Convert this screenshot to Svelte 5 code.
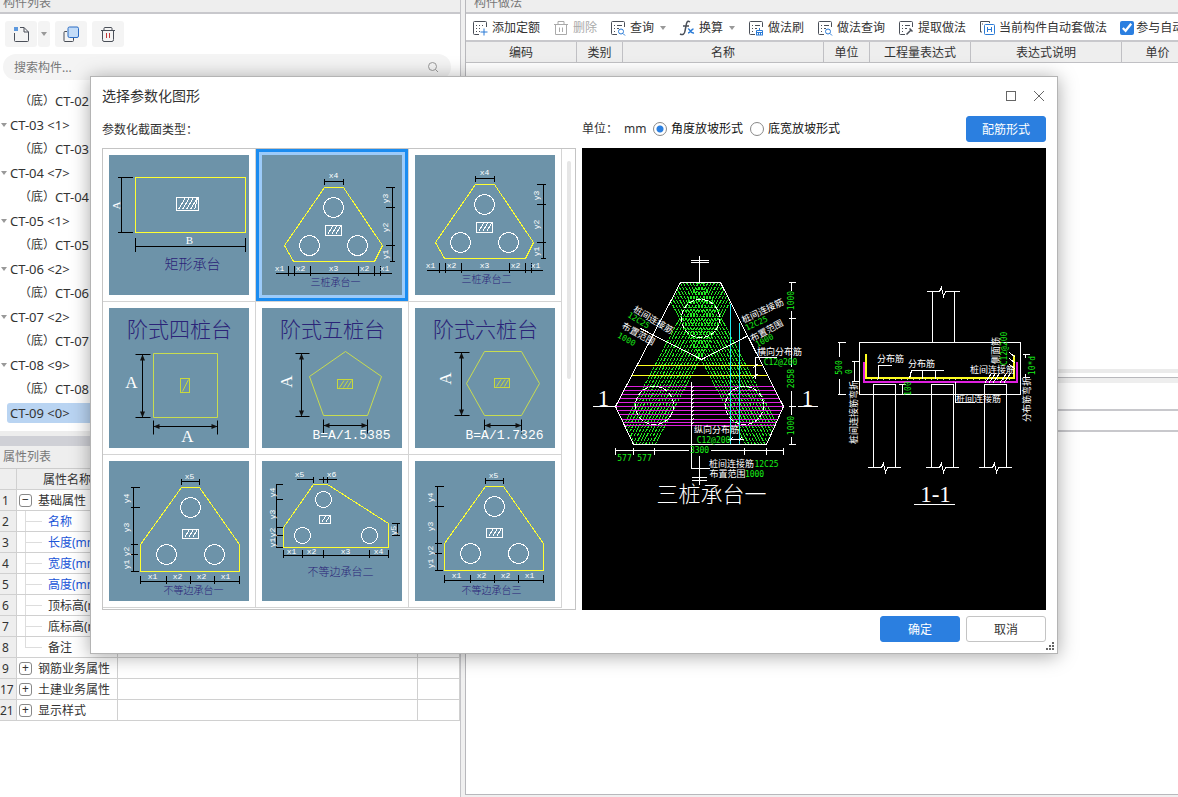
<script lang="ts">
  type Label = [number, number, string, number?];

  interface Thumb {
    name: string;
    title: [number, number, number];
    outline: string;
    circles?: [number, number][];
    r?: number;
    column: [number, number, number, number];
    dims: string;
    labels: Label[];
    shift?: [number, number];
    stepped?: boolean;
    note?: string;
  }

  const tools = [
    { icon: "add", label: "添加定额" },
    { icon: "trash", label: "删除", disabled: true },
    { icon: "find", label: "查询", menu: true },
    { icon: "fx", label: "换算", menu: true },
    { icon: "brush", label: "做法刷" },
    { icon: "find", label: "做法查询" },
    { icon: "pick", label: "提取做法" },
    { icon: "auto", label: "当前构件自动套做法" },
  ];

  const columns = ["编码", "类别", "名称", "单位", "工程量表达式", "表达式说明", "单价"];

  const tree = [
    { code: "CT-02", child: true },
    { code: "CT-03 <1>" },
    { code: "CT-03", child: true },
    { code: "CT-04 <7>" },
    { code: "CT-04", child: true },
    { code: "CT-05 <1>" },
    { code: "CT-05", child: true },
    { code: "CT-06 <2>" },
    { code: "CT-06", child: true },
    { code: "CT-07 <2>" },
    { code: "CT-07", child: true },
    { code: "CT-08 <9>" },
    { code: "CT-08", child: true },
    { code: "CT-09 <0>", selected: true },
  ];

  const properties = [
    { no: 1, name: "基础属性", sign: "−" },
    { no: 2, name: "名称", blue: true },
    { no: 3, name: "长度(mm)", blue: true },
    { no: 4, name: "宽度(mm)", blue: true },
    { no: 5, name: "高度(mm)", blue: true },
    { no: 6, name: "顶标高(m)" },
    { no: 7, name: "底标高(m)" },
    { no: 8, name: "备注", last: true },
    { no: 9, name: "钢筋业务属性", sign: "+" },
    { no: 17, name: "土建业务属性", sign: "+" },
    { no: 21, name: "显示样式", sign: "+" },
  ];

  const triangle = {
    outline: "62,32 81,32 120,90 112,106 31,106 22,90",
    circles: [[71, 52], [47, 90], [95, 90]] as [number, number][],
    column: [63, 70, 16, 10] as [number, number, number, number],
    dims:
      "M62 26H81M62 23V29M81 23V29 M130 32V106M123 32H132M123 52H132M123 90H132M127 106H132" +
      "M13 118H129M26 110V120M32 110V120M48 110V120M96 110V120M112 110V120M118 110V120",
    labels: [
      [71, 20, "x4"], [123, 43, "y3", -90], [123, 72, "y2", -90], [123, 99, "y1", -90],
      [17, 113, "x1"], [38, 113, "x2"], [71, 113, "x3"], [102, 113, "x2"], [122, 113, "x1"],
    ] as Label[],
  };

  const uneven = {
    outline: "72,26 90,26 130,83 130,110 31,110 31,83",
    circles: [[81, 46], [57, 93], [105, 93]] as [number, number][],
    column: [73, 68, 16, 9] as [number, number, number, number],
    dims:
      "M72 20H90M72 17V23M90 17V23 M24 26V110M21 26H30M21 46H30M21 83H28M21 93H28M21 110H29" +
      "M31 120H130M31 114V122M57 114V122M81 114V122M105 114V122M130 114V122",
    labels: [
      [80, 15, "x5"], [17, 37, "y4", -90], [17, 66, "y3", -90], [17, 90, "y2", -90], [17, 103, "y1", -90],
      [43, 115, "x1"], [68, 115, "x2"], [92, 115, "x2"], [116, 115, "x1"],
    ] as Label[],
  };

  const thumbs: Thumb[] = [
    {
      name: "矩形承台",
      title: [83, 107, 14],
      outline: "26,22 136,22 136,77 26,77",
      column: [67, 42, 22, 13],
      dims: "M12 22V77M8 22H23M8 77H23 M26 91H136M26 82V96M136 82V96",
      labels: [[6, 50, "A", -90], [80, 84, "B"]],
    },
    { name: "三桩承台一", title: [73, 126, 10], ...triangle },
    { name: "三桩承台二", title: [73, 126, 10], ...triangle, shift: [-2, -3] },
    {
      name: "阶式四桩台",
      title: [70, 19, 21],
      stepped: true,
      outline: "44,45 108,45 108,109 44,109",
      column: [71, 70, 9, 14],
      dims: "M33 46V109M26 46H41M26 109H41 M44 118H108M44 112V126M108 112V126",
      labels: [[22, 74, "A"], [78, 128, "A"]],
    },
    {
      name: "阶式五桩台",
      title: [70, 19, 21],
      stepped: true,
      outline: "83,43 119,68 105,107 61,107 47,68",
      column: [75, 71, 15, 9],
      dims: "M39 45V108M33 45H47M33 108H47 M61 117H105M61 111V125M105 111V125",
      labels: [[24, 73, "A", -90]],
      note: "B=A/1.5385",
    },
    {
      name: "阶式六桩台",
      title: [70, 19, 21],
      stepped: true,
      outline: "69,43 106,43 124,75 106,107 69,107 51,75",
      column: [79, 70, 15, 9],
      dims: "M46 44V107M39 44H54M39 107H54 M69 117H106M69 111V125M106 111V125",
      labels: [[30, 70, "A", -90]],
      note: "B=A/1.7326",
    },
    { name: "不等边承台一", title: [84, 128, 10], ...uneven },
    {
      name: "不等边承台二",
      title: [78, 109, 11],
      outline: "51,23 65,23 126,62 126,86 21,86 21,66",
      circles: [[61, 38], [40, 74], [107, 74]],
      r: 8,
      column: [57, 54, 11, 8],
      dims:
        "M34 18H51M51 15V21M56 18H74M61 15V21M65 15V21 M14 23V86M13 23H20M13 38H20M13 66H20M13 74H20M13 86H20" +
        "M135 62V74M129 62H137M129 74H137 M21 94H126M21 88V96M40 88V96M61 88V96M107 88V96M126 88V96",
      labels: [
        [37, 13, "x5"], [69, 13, "x6"], [10, 31, "y4", -90], [10, 53, "y3", -90], [10, 71, "y2", -90],
        [10, 81, "y1", -90], [131, 69, "y5", -90], [29, 90, "x1"], [49, 90, "x2"], [83, 90, "x3"], [116, 90, "x4"],
      ],
    },
    { name: "不等边承台三", title: [78, 129, 10], ...uneven, shift: [-2, -1] },
  ];

  const hatch = ([x, y, w, h]: number[]) => {
    let d = "";
    for (let i = 2; i < w - 3; i += 4) {
      d += `M${x + i} ${y + h - 1}L${x + Math.min(i + h / 2, w - 1)} ${y + 1}`;
    }
    return d;
  };

  // arrowheads at both ends of the two dimension lines of a stepped cap
  const arrows = (dims: string) => {
    const [, vx, y1, y2] = dims.match(/^M(\d+) (\d+)V(\d+)/)!.map(Number);
    const [, x1, hy, x2] = dims.split(" M")[1].match(/^(\d+) (\d+)H(\d+)/)!.map(Number);
    return (
      `M${vx} ${y1}l2.500 6h-5zM${vx} ${y2}l2.500 -6h-5z` +
      `M${x1} ${hy}l6 2.500v-5zM${x2} ${hy}l-6 2.500v-5z`
    );
  };

  const bars = Array.from({ length: 14 }, (_, i) => -21 + i * 3.2);
  const ties = [386, 390, 394, 398, 402, 406, 410, 414, 419, 422, 425];
  const notches = Array.from({ length: 10 }, (_, i) => 387 + i * 4);
  const capOutline = "680,282 720,282 783,406 766,444 633,444 615,406";

  const white: [number, number, string, number?][] = [
    [653, 319, "桩间连接筋", 31],
    [638, 333, "布置范围", 29],
    [762, 310, "桩间连接筋", -25],
    [766, 330, "布置范围", -28],
    [779, 351, "横向分布筋"],
    [716, 429, "纵向分布筋"],
    [731, 463, "桩间连接筋"],
    [727, 473, "布置范围"],
    [890, 358, "分布筋"],
    [921, 363, "分布筋"],
    [992, 369, "桩间连接筋"],
    [978, 398, "桩间连接筋"],
    [995, 350, "侧面筋", -90],
    [853, 412, "桩间连接筋弯折", -90],
    [1026, 399, "分布筋弯折", -90],
  ];

  const green: [number, number, string, number?][] = [
    [638, 320, "12C25", 31],
    [626, 339, "1000", 29],
    [756, 323, "12C25", -25],
    [764, 340, "1000", -28],
    [780, 362, "C12@200"],
    [713, 440, "C12@200"],
    [699, 450, "3300"],
    [624, 458, "577"],
    [644, 458, "577"],
    [766, 464, "12C25"],
    [754, 474, "1000"],
    [791, 300, "1000", -90],
    [791, 378, "2858", -90],
    [791, 425, "1000", -90],
    [839, 367, "500", -90],
    [849, 371, "0", -90],
    [908, 388, "100", -90],
    [1004, 348, "C12@200", -90],
    [1032, 365, "10*d", -90],
  ];

  let selected = $state(1);
  let slope = $state("angle");
  let join = $state(true);
</script>

{#snippet icon(kind: string)}
  <svg class="icon" viewBox="0 0 16 16" aria-hidden="true">
    {#if kind === "trash"}
      <path class="ink" d="M1 4.5H15M5 4V1.5H11V4M2.5 5V14.5H13.5V5M6.5 7.5V12M9.5 7.5V12" />
    {:else if kind === "fx"}
      <path class="ink bold" d="M11 2C8 0 7.500 3 7 6L6 11C5.500 14 4 15.500 1 14M4 6H10" />
      <path class="blue bold" d="M9 9C11 8 11 14 15 13M14.500 9C12 9 12 13 9 13" />
    {:else if kind === "auto"}
      <path class="ink" d="M3 12H1.500V1.500H10.500V3M4 4H3" />
      <rect class="blue" x="5.500" y="4.500" width="10" height="10" rx="1" />
      <path class="blue" d="M8.500 7V12M12.500 7V12M8.500 9.500H12.500" />
    {:else}
      <path class="ink" d="M7 14.500H2.500Q1.500 14.500 1.500 13.500V2.500Q1.500 1.500 2.500 1.500H13.500Q14.500 1.500 14.500 2.500V7" />
      {#if kind === "add"}
        <path class="ink dots" d="M4 5.500H13M4 8.500H10M4 11.500H8" />
        <path class="blue" d="M12 8.500V15.500M8.500 12H15.500" />
      {:else}
        <path class="ink" d="M4 5.500H5M7 5.500H12M4 8.500H5M7 8.500H9M4 11.500H5" />
        {#if kind === "find"}
          <circle class="blue" cx="11" cy="11.500" r="2.500" />
          <path class="blue" d="M13 13.500L15 15.500" />
        {:else if kind === "brush"}
          <path class="blue" d="M11.500 8V10.500M8.500 15V10.500H14.500V15M8.500 12.500H14.500M10.500 15V13M12.500 15V13M8 15H15" />
        {:else}
          <path class="ink bold" d="M8.500 14.500L13 10M11.500 8.500L14.500 11.500" />
        {/if}
      {/if}
    {/if}
  </svg>
{/snippet}

<div class="workspace">
  <aside class="left">
    <h2 class="bar">构件列表</h2>
    <div class="actions">
      <button class="square first" aria-label="新建">
        <svg class="icon" viewBox="0 0 16 16">
          <path class="check" d="M1 2H5M1 4H5M2 1V5M4 1V5" />
          <path class="ink" d="M1.500 7V14.500Q1.500 15.500 2.500 15.500H14.500Q15.500 15.500 15.500 14.500V6L11 1.500H7M11 1.500V6H15.500" />
        </svg>
      </button>
      <button class="square drop" aria-label="新建选项"><span class="caret"></span></button>
      <button class="square" aria-label="复制">
        <svg class="icon" viewBox="0 0 16 16">
          <path class="ink" d="M4 5.500H2Q1 5.500 1 6.500V14.500Q1 15.500 2 15.500H9.500Q10.500 15.500 10.500 14.500V12" />
          <rect class="copy" x="5" y="1" width="10.500" height="10.500" rx="1.500" />
        </svg>
      </button>
      <button class="square" aria-label="删除构件">
        <svg class="icon" viewBox="0 0 16 16">
          <path class="ink" d="M1 4.500H15M4 4V2.500Q4 1.500 5 1.500H11Q12 1.500 12 2.500V4M2.500 5V13.500Q2.500 15.500 4 15.500H12Q13.500 15.500 13.500 13.500V5" />
          <path class="red" d="M6.500 7V12M9.500 7V12" />
        </svg>
      </button>
    </div>
    <label class="search">
      <input type="text" placeholder="搜索构件..." aria-label="搜索构件" />
      <svg class="lens" viewBox="0 0 12 12"><circle cx="5.500" cy="5.500" r="4" /><path d="M8.500 8.500L11 11" /></svg>
    </label>
    <ul class="tree">
      {#each tree as node}
        <li class:child={node.child} class:selected={node.selected}>
          {#if node.child}
            <span>（底）</span>
          {:else if !node.selected}
            <span class="caret"></span>
          {/if}
          <span class="code">{node.code}</span>
        </li>
      {/each}
    </ul>
    <div class="splitter"></div>
    <h2 class="bar low">属性列表</h2>
    <table class="props">
      <colgroup><col class="no" /><col class="name" /><col /><col class="extra" /></colgroup>
      <thead>
        <tr><th></th><th>属性名称</th><th>属性值</th><th>附加</th></tr>
      </thead>
      <tbody>
        {#each properties as row}
          <tr>
            <th>{row.no}</th>
            <td class="label" class:leaf={!row.sign} class:blue-text={row.blue} class:last={row.last}>
              {#if row.sign}<button class="toggle" aria-label="展开">{row.sign}</button>{/if}{row.name}
            </td>
            <td></td>
            <td></td>
          </tr>
        {/each}
      </tbody>
    </table>
  </aside>

  <main class="right">
    <h2 class="bar">构件做法</h2>
    <div class="tools">
      {#each tools as tool}
        <button class="tool" disabled={tool.disabled}>
          {@render icon(tool.icon)}{tool.label}
          {#if tool.menu}<span class="caret"></span>{/if}
        </button>
      {/each}
      <label class="tool join">
        <input type="checkbox" bind:checked={join} />参与自动套
      </label>
    </div>
    <div class="sheet">
      <table class="grid">
        <colgroup>
          <col class="c1" /><col class="c2" /><col class="c3" /><col class="c4" /><col class="c5" /><col class="c6" /><col class="c7" />
        </colgroup>
        <thead>
          <tr>{#each columns as column}<th>{column}</th>{/each}</tr>
        </thead>
      </table>
    </div>
    <div class="lower">
      <div class="strip"></div>
      <div class="lower-tools"></div>
      <div class="lower-head"></div>
    </div>
  </main>

  <div class="dialog" role="dialog" aria-labelledby="dialog-title">
    <header>
      <h1 id="dialog-title">选择参数化图形</h1>
      <button class="plain" aria-label="最大化">
        <svg viewBox="0 0 12 12"><rect x="1.500" y="1.500" width="9" height="9" /></svg>
      </button>
      <button class="plain" aria-label="关闭">
        <svg viewBox="0 0 12 12"><path d="M1 1L11 11M11 1L1 11" /></svg>
      </button>
    </header>

    <div class="content">
      <section class="types">
        <div class="caption">参数化截面类型：</div>
        <div class="gallery">
          <div class="cells">
            {#each thumbs as thumb, i}
              <button
                class="cell"
                class:active={selected === i}
                aria-label={thumb.name}
                aria-pressed={selected === i}
                onclick={() => (selected = i)}
              >
                <svg class="thumb" class:stepped={thumb.stepped} viewBox="-0.5 -0.5 140 140">
                  <g transform="translate({(thumb.shift ?? [0, 0]).join(' ')})">
                    <path class="dim" d={thumb.dims} />
                    {#if thumb.stepped}<path class="arrow" d={arrows(thumb.dims)} />{/if}
                    <polygon class="cap" points={thumb.outline} />
                    {#each thumb.circles ?? [] as [cx, cy]}
                      <circle {cx} {cy} r={thumb.r ?? 10} />
                    {/each}
                    <rect class="col" x={thumb.column[0]} y={thumb.column[1]} width={thumb.column[2]} height={thumb.column[3]} />
                    <path class="col" d={hatch(thumb.column)} />
                    {#each thumb.labels as [x, y, text, turn]}
                      <text class="mark" class:big={text.length === 1} transform="translate({x} {y}) rotate({turn ?? 0})">{text}</text>
                    {/each}
                    <text class="title" x={thumb.title[0]} y={thumb.title[1]} font-size={thumb.title[2]}>{thumb.name}</text>
                    {#if thumb.note}<text class="note" x="89" y="127">{thumb.note}</text>{/if}
                  </g>
                </svg>
              </button>
            {/each}
          </div>
          <div class="scroll"></div>
        </div>
      </section>

      <section class="preview">
        <div class="options">
          <span class="unit">单位：</span>
          <span class="mm">mm</span>
          <label><input type="radio" name="slope" value="angle" bind:group={slope} />角度放坡形式</label>
          <label><input type="radio" name="slope" value="width" bind:group={slope} />底宽放坡形式</label>
          <button class="btn primary">配筋形式</button>
        </div>
        <svg class="drawing" viewBox="581.5 147.5 464 462" role="img" aria-label="三桩承台一">
          <defs>
            <clipPath id="cap-clip"><polygon points={capOutline} /></clipPath>
          </defs>
          <g clip-path="url(#cap-clip)">
            {#each bars as offset}
              <path class="g" d="M{719 + offset} 282L{634 + offset} 444M{681 - offset} 282L{766 - offset} 444" />
            {/each}
            {#each ties as y}
              <path class="m" d="M610 {y}H790" />
            {/each}
            <path class="y" d="M610 365H790M610 375H790" />
          </g>
          <path class="c" d="M730 303V444M739 322V444" />
          <polygon class="w" points={capOutline} />
          <g class="piles">
            <circle cx="700" cy="318" r="19" />
            <circle cx="654" cy="405" r="19" />
            <circle cx="744" cy="405" r="19" />
          </g>
          <path class="w" d="M640 328L701 359L748 335" />
          <path class="w" d="M699 255V282M690 260H708M690 262H708M699 455V484M691 477H706M691 480H706" />
          <path class="w" d="M691 381V468H709" />
          {#each notches as y}
            <path class="w" d="M690 {y + 2}L693 {y - 1}" />
          {/each}
          <path class="w" d="M776 357H755V378M753 367L758 363M753 377L758 373M727 439H743M729 441L732 437M738 441L741 437" />
          <path class="w" d="M791 282V290M791 310V366M791 390V414M791 436V444M788 282H795M788 318H795M788 406H795M788 444H795" />
          <path class="w" d="M615 450H688M710 450H783M615 447V454M633 447V454M654 447V454M744 447V454M766 447V454M783 447V454" />
          <path class="w" d="M592 406H614M797 406H817" />

          <path class="w" d="M932 342V291M954 342V291M926 291H939L941 287L943 296L945 291H959" />
          <path class="w" d="M859 342H1020V394H859Z" />
          <path class="w" d="M873 467V384H895V467M931 467V384H953V467M984 467V384H1006V467" />
          <path class="w" d="M867 467H881L883 463L885 472L887 467H900M925 467H939L941 463L943 472L945 467H958M978 467H992L994 463L996 472L998 467H1011" />
          <path class="m thick" d="M863 361V381H1016V361" />
          <path class="y thick" d="M865 353V377H1013V354" />
          <path class="speck" d="M870 379H1010" />
          <path class="w" d="M878 378V365H891M909 378L911 370H943M922 370V378M935 370V378M955 381V402H974" />
          <path class="w" d="M984 383L991 373M988 383L995 373M992 383L999 373M999 383L1006 373M1003 383L1010 373M1009 352L1015 357M1009 358L1015 363M1009 364L1015 369" />
          <path class="w" d="M839 342V356M839 378V394M837 342H845M837 394H845M854 361V381M851 361H859M851 381H859" />
          <path class="w" d="M902 384V394M898 384H905M898 394H905M1022 354H1029M1022 377H1029M1025 354V357M1025 373V377" />
          <path class="w" d="M913 504H954" />
          {#each white as [x, y, text, turn]}
            <text class="wt" transform="translate({x} {y}) rotate({turn ?? 0})">{text}</text>
          {/each}
          {#each green as [x, y, text, turn]}
            <text class="gt" transform="translate({x} {y}) rotate({turn ?? 0})">{text}</text>
          {/each}
          <text class="num" x="603" y="398">1</text>
          <text class="num" x="807" y="398">1</text>
          <text class="num" x="935" y="494">1-1</text>
          <text class="big-title" x="711" y="491">三桩承台一</text>
        </svg>
      </section>
    </div>

    <footer>
      <button class="btn primary">确定</button>
      <button class="btn">取消</button>
    </footer>
    <svg class="grip" viewBox="0 0 8 8" aria-hidden="true">
      <path d="M6 0h2v2h-2zM3 3h2v2h-2zM6 3h2v2h-2zM0 6h2v2h-2zM3 6h2v2h-2zM6 6h2v2h-2z" />
    </svg>
  </div>
</div>

<style>
  :global(body) {
    overflow: hidden;
    background: #fff;
  }

  .workspace {
    position: relative;
    display: flex;
    gap: 4px;
    box-sizing: border-box;
    height: calc(100vh + 9px);
    margin-top: -9px;
    background: #f0f0f0;
    color: #333;
    font: 12px/20px "Noto Sans", "Noto Sans CJK SC", sans-serif;
  }

  button,
  input {
    margin: 0;
    padding: 0;
    border: 0;
    background: none;
    color: inherit;
    font: inherit;
  }

  .left {
    flex: 0 0 460px;
    border-right: 1px solid #c4c4c8;
    background: #fff;
  }

  .right {
    display: flex;
    flex: 1;
    flex-direction: column;
    min-width: 0;
    margin-bottom: 2px;
    border-bottom: 1px solid #b8b8bc;
    border-left: 1px solid #b8b8bc;
    background: #fff;
  }

  .bar {
    height: 21px;
    margin: 0;
    padding-left: 3px;
    background: #eee;
    color: #777;
    font-size: 12px;
    font-weight: 400;
    line-height: 23px;
  }

  .left > .bar:first-child,
  .right > .bar {
    border-bottom: 2px solid #c8c8cc;
  }

  .bar.low {
    height: 22px;
    line-height: 22px;
  }

  .right > .bar {
    padding-left: 8px;
  }

  .caret {
    flex: none;
    width: 0;
    border: 3px solid transparent;
    border-top: 4px solid #999;
    border-bottom: 0;
  }

  .icon {
    flex: none;
    width: 16px;
    height: 16px;
    fill: none;
  }

  .ink {
    stroke: #4a4f58;
  }

  .blue {
    stroke: #2b7bd6;
  }

  .bold {
    stroke-width: 1.5;
  }

  .dots {
    stroke-dasharray: 1 2;
  }

  .red {
    stroke: #c23a3a;
  }

  .check {
    stroke: #2b7bd6;
    stroke-width: 1;
  }

  .copy {
    fill: #c3dcf8;
    stroke: #2b6cc4;
  }

  .actions {
    display: flex;
    gap: 5px;
    padding: 7px 5px;
  }

  .square {
    display: flex;
    align-items: center;
    justify-content: center;
    width: 32px;
    height: 26px;
    border-radius: 3px;
    background: #f4f4f4;
  }

  .drop {
    width: 12px;
    margin-left: -4px;
  }

  .search {
    display: flex;
    align-items: center;
    height: 26px;
    margin: 0 9px 0 3px;
    padding: 0 12px 0 11px;
    border-radius: 13px;
    background: #f4f4f4;
  }

  .search input {
    flex: 1;
    padding-top: 2px;
    outline: 0;
  }

  .search input::placeholder {
    color: #777;
  }

  .lens {
    width: 12px;
    height: 12px;
    fill: none;
    stroke: #999;
  }

  .tree {
    display: flex;
    flex-direction: column;
    gap: 4px;
    margin: 0;
    padding: 11px 0 8px;
    list-style: none;
  }

  .tree li {
    display: flex;
    align-items: center;
    height: 20px;
    gap: 3px;
  }

  .tree li.child {
    padding-left: 19px;
    gap: 0;
  }

  .tree li.selected {
    margin-left: 7px;
    padding-left: 3px;
    border-radius: 3px 0 0 3px;
    background: #b9d4f2;
  }

  .tree .caret {
    margin-left: 1px;
  }

  .code {
    font-size: 13px;
    white-space: pre;
  }

  .splitter {
    height: 10px;
    border-top: 5px solid #ededed;
    background: #cfd0d6;
  }

  table {
    width: 100%;
    border-collapse: separate;
    border-spacing: 0;
    table-layout: fixed;
  }

  th {
    font-weight: 400;
  }

  .props {
    border-top: 1px solid #ccc;
  }

  .props th,
  .props td {
    box-sizing: border-box;
    height: 21px;
    padding: 2px 0 0;
    border-right: 1px solid #d0d0d0;
    border-bottom: 1px solid #d0d0d0;
    line-height: 18px;
    white-space: nowrap;
  }

  .props th {
    background: #eee;
  }

  .props tbody th {
    overflow: hidden;
    padding-left: 2px;
    text-align: left;
  }

  .props tbody tr:nth-child(n + 10) th {
    padding-left: 0;
  }

  .no {
    width: 17px;
  }

  .name {
    width: 101px;
  }

  .extra {
    width: 42px;
  }

  .props .label {
    position: relative;
    overflow: hidden;
    padding-left: 2px;
  }

  .props .leaf {
    padding-left: 31px;
  }

  .props .blue-text {
    color: #1a55d8;
  }

  .leaf::before {
    position: absolute;
    top: 0;
    left: 8px;
    height: 21px;
    border-left: 1px solid #ddd;
    content: "";
  }

  .leaf.last::before {
    height: 10px;
  }

  .leaf::after {
    position: absolute;
    top: 10px;
    left: 8px;
    width: 17px;
    border-top: 1px solid #ddd;
    content: "";
  }

  .toggle {
    width: 13px;
    height: 13px;
    box-sizing: border-box;
    margin-right: 6px;
    border: 1px solid #888;
    border-radius: 3px;
    font-size: 12px;
    line-height: 10px;
    vertical-align: 1px;
  }

  .tools {
    display: flex;
    align-items: center;
    height: 24px;
    gap: 13px;
    padding: 2px 0 0 6px;
    overflow: hidden;
    border-bottom: 2px solid #c8c8cc;
  }

  .tool {
    display: flex;
    flex: none;
    align-items: center;
    gap: 4px;
    white-space: nowrap;
  }

  .tool:disabled {
    color: #aaa;
  }

  .tool:disabled .ink {
    stroke: #aaa;
  }

  .tool .caret {
    margin-left: 2px;
  }

  .join {
    gap: 2px;
  }

  .join input {
    width: 14px;
    height: 14px;
    accent-color: #2b7fe0;
  }

  .sheet {
    flex: 1;
    overflow: hidden;
  }

  .grid {
    width: 728px;
  }

  .grid th {
    box-sizing: border-box;
    height: 21px;
    padding: 2px 0 0;
    border-right: 1px solid #c0c0c4;
    border-bottom: 1px solid #c0c0c4;
    background: #eee;
    line-height: 18px;
  }

  .c1 { width: 111px; }
  .c2 { width: 46px; }
  .c3 { width: 201px; }
  .c4 { width: 46px; }
  .c5 { width: 101px; }
  .c6 { width: 151px; }
  .c7 { width: 72px; }

  .lower {
    height: 421px;
    border-top: 4px solid #ebebeb;
  }

  .strip {
    height: 5px;
    margin-top: 4px;
    border-top: 1px solid #b8b8bc;
    background: #eee;
  }

  .lower-tools {
    height: 26px;
    border-bottom: 2px solid #c8c8cc;
  }

  .lower-head {
    height: 19px;
    border-bottom: 2px solid #c8c8cc;
  }

  .dialog {
    position: absolute;
    top: 85px;
    right: 120px;
    left: 90px;
    border: 1px solid #b4b4b4;
    background: #fff;
    box-shadow: 0 2px 18px rgb(0 0 0 / 35%);
  }

  header {
    display: flex;
    align-items: center;
    gap: 16px;
    height: 38px;
    padding: 0 12px 0 11px;
  }

  h1 {
    flex: 1;
    margin: 0;
    font-size: 14px;
    font-weight: 400;
  }

  .plain {
    width: 12px;
    height: 12px;
    line-height: 0;
  }

  .plain svg {
    width: 12px;
    height: 12px;
    fill: none;
    stroke: #666;
  }

  .content {
    display: flex;
    gap: 6px;
    padding: 0 11px;
  }

  .types {
    flex: none;
    width: 474px;
  }

  .caption {
    height: 33px;
    line-height: 30px;
  }

  .gallery {
    display: flex;
    box-sizing: border-box;
    height: 462px;
    border: 1px solid #c4c4c4;
  }

  .cells {
    display: grid;
    grid-template-columns: repeat(3, 153px);
    grid-auto-rows: 153px;
  }

  .cell {
    padding: 6px;
    border-right: 1px solid #d4d4d4;
    border-bottom: 1px solid #d4d4d4;
    line-height: 0;
  }

  .cell.active {
    box-shadow: inset 0 0 0 3px #1b8cf0, inset 0 0 0 6px #9ccbfa;
  }

  .scroll {
    width: 4px;
    height: 218px;
    margin: 12px 4px 0 5px;
    border-radius: 2px;
    background: #e6e6e6;
  }

  .thumb {
    width: 140px;
    height: 140px;
    background: #6d93a9;
    fill: none;
    shape-rendering: crispEdges;
  }

  .thumb.stepped {
    shape-rendering: auto;
  }

  .dim {
    stroke: #000;
  }

  .arrow {
    fill: #111;
  }

  .cap {
    stroke: #ffff30;
  }

  .thumb circle,
  .col {
    stroke: #fff;
  }

  .stepped .cap {
    stroke: #c8dc50;
  }

  .stepped .col {
    stroke: #c8d83c;
  }

  text {
    dominant-baseline: central;
    text-anchor: middle;
  }

  .mark {
    fill: #fff;
    font: 8px "Liberation Mono", monospace;
  }

  .mark.big {
    font: 11px "Liberation Serif", serif;
  }

  .stepped .mark.big {
    font-size: 17px;
  }

  .title {
    fill: #2b2478;
    font-family: "Noto Sans CJK SC", sans-serif;
    font-weight: 300;
  }

  .note {
    fill: #fff;
    font: 13px "Liberation Mono", monospace;
  }

  .preview {
    flex: 1;
    min-width: 0;
  }

  .options {
    display: flex;
    align-items: flex-start;
    height: 33px;
    line-height: 28px;
  }

  .options label {
    display: flex;
    align-items: center;
    gap: 4px;
    height: 27px;
    margin-right: 7px;
    color: #111;
  }

  .unit {
    width: 42px;
  }

  .mm {
    width: 29px;
  }

  input[type="radio"] {
    width: 14px;
    height: 14px;
    border: 1px solid #888;
    border-radius: 50%;
    appearance: none;
  }

  input[type="radio"]:checked {
    background: radial-gradient(#2b7fe0 0 3px, transparent 4px);
  }

  .btn {
    box-sizing: border-box;
    width: 80px;
    height: 26px;
    padding-top: 1px;
    border: 1px solid #c4c4c4;
    border-radius: 3px;
    line-height: 24px;
  }

  .primary {
    border-color: #2b7fe0;
    background: #2b7fe0;
    color: #fff;
  }

  .options .btn {
    margin: 1px 0 0 auto;
  }

  .drawing {
    display: block;
    width: 100%;
    background: #000;
    fill: none;
    shape-rendering: crispEdges;
  }

  .w,
  .piles {
    stroke: #fff;
  }

  .piles {
    stroke-dasharray: 5 2;
  }

  .g {
    stroke: #22e822;
    stroke-dasharray: 4 1;
  }

  .m {
    stroke: #e020e0;
  }

  .y {
    stroke: #ffff20;
  }

  .c {
    stroke: #20e8f0;
  }

  .thick {
    stroke-width: 2;
  }

  .speck {
    stroke: #c8c8c8;
    stroke-dasharray: 1 5;
  }

  .wt {
    fill: #fff;
    font: 9px "Noto Sans CJK SC", sans-serif;
  }

  .gt {
    fill: #18f018;
    font: 8px "DejaVu Sans Mono", monospace;
  }

  .num {
    fill: #fff;
    font: 23px "Liberation Serif", serif;
  }

  .big-title {
    fill: #fff;
    font: 300 22px "Noto Sans CJK SC", sans-serif;
  }

  footer {
    display: flex;
    justify-content: flex-end;
    gap: 6px;
    padding: 6px 11px 11px;
  }

  .grip {
    position: absolute;
    right: 3px;
    bottom: 3px;
    width: 8px;
    height: 8px;
    fill: #666;
  }
</style>
